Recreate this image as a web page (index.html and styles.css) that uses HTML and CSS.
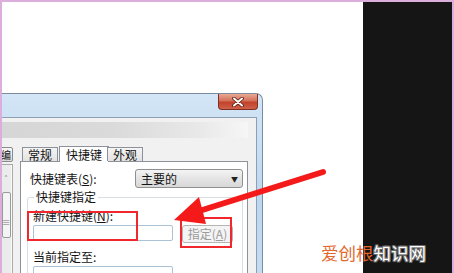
FILE: index.html
```html
<!DOCTYPE html>
<html>
<head>
    <meta charset="utf-8">
    <title>快捷键</title>
    <link rel="stylesheet" href="styles.css">
</head>
<body>
    <div class="page">
        <div class="screen">
            <div class="window">
                <div class="titlebar">
                    <div class="close-btn">
                        <svg width="14" height="10" viewBox="0 0 14 10">
                            <path d="M3 1.5 L11 8.5 M11 1.5 L3 8.5" stroke="#5a1a10" stroke-width="3.6" stroke-linecap="round"/>
                            <path d="M3 1.5 L11 8.5 M11 1.5 L3 8.5" stroke="#fff" stroke-width="2" stroke-linecap="round"/>
                        </svg>
                    </div>
                </div>
                <div class="client">
                    <div class="toolbar-bar"></div>
                    <div class="body-row">
                        <div class="side">
                            <div class="side-btn">编</div>
                            <div class="listbox">
                                <div class="scrollbar">
                                    <span class="sb-arrow">&#708;</span>
                                    <span class="sb-thumb">&#8801;</span>
                                </div>
                            </div>
                        </div>
                        <div class="tabs-area">
                            <div class="tabstrip">
                                <div class="tab">常规</div>
                                <div class="tab active">快捷键</div>
                                <div class="tab">外观</div>
                            </div>
                            <div class="panel">
                                <div class="row">
                                    <span class="label">快捷键表(<u>S</u>):</span>
                                    <div class="combo">
                                        <span>主要的</span>
                                        <span class="combo-arrow">&#9660;</span>
                                    </div>
                                </div>
                                <fieldset class="group">
                                    <legend>快捷键指定</legend>
                                    <div class="label field-label">新建快捷键(<u>N</u>):</div>
                                    <div class="field-row">
                                        <div class="textbox"></div>
                                        <div class="btn disabled">指定(<u>A</u>)</div>
                                    </div>
                                    <div class="label field-label2">当前指定至:</div>
                                    <div class="textbox tall"></div>
                                </fieldset>
                            </div>
                        </div>
                    </div>
                </div>
            </div>
        </div>
        <div class="dark"></div>

        <!-- annotation overlay -->
        <div class="mark mark-input"></div>
        <div class="mark mark-btn"></div>
        <svg class="arrow" width="454" height="273" viewBox="0 0 454 273">
            <line x1="323" y1="172" x2="196" y2="212" stroke="#f51a1a" stroke-width="6" stroke-linecap="round"/>
            <polygon points="174,220 199,197 206,224" fill="#f51a1a"/>
        </svg>
        <div class="watermark"><span class="wm-a">爱创根</span><span class="wm-b">知识网</span></div>
    </div>
</body>
</html>
```

FILE: styles.css
```css
body {
    margin: 0;
    font-family: "Noto Sans CJK SC", "Noto Sans", sans-serif;
    font-size: 12px;
    color: #141414;
}

.page {
    position: relative;
    width: 454px;
    height: 273px;
    box-sizing: border-box;
    padding: 2px 2px 0 2px;
    background: #dcaedc;
    display: flex;
    overflow: hidden;
}

.screen {
    flex: 1;
    background: #fff;
    overflow: hidden;
    display: flex;
    align-items: flex-start;
}

.dark {
    width: 89px;
    background: #151515;
}

/* dialog window */
.window {
    flex: none;
    width: 361px;
    height: 180px;
    margin-top: 91px;
    margin-left: -100px;
    box-sizing: border-box;
    border: 1px solid #7b8ca0;
    border-bottom: none;
    border-radius: 0 7px 0 0;
    padding: 0 5px;
    background: linear-gradient(to bottom, #d3e5f6, #bcd7f0 60%, #c4dcf2);
    display: flex;
    flex-direction: column;
}

.titlebar {
    flex: none;
    height: 23px;
    margin-right: -5px;
    padding-right: 4px;
    display: flex;
    justify-content: flex-end;
    align-items: flex-start;
}

.close-btn {
    width: 40px;
    height: 16px;
    box-sizing: border-box;
    border: 1px solid #7e2e22;
    border-top: none;
    border-radius: 0 0 4px 4px;
    background: linear-gradient(to bottom, #e9a893, #d4715a 45%, #c2422b 55%, #d0614a);
    display: flex;
    align-items: center;
    justify-content: center;
}

.client {
    flex: 1;
    min-height: 0;
    overflow: hidden;
    border: 1px solid #8e9fb3;
    border-bottom: none;
    background: #f1f1f1;
    display: flex;
    flex-direction: column;
}

.toolbar-bar {
    flex: none;
    height: 16px;
    margin: 4px 8px 0 0;
    background: linear-gradient(to right, #d2d2d2, #dadada 60%, #e8e8e8 85%, #f6f6f6);
}

.body-row {
    flex: 1;
    min-height: 0;
    display: flex;
    margin-top: 7px;
    gap: 7px;
}

/* left pane, mostly cut off */
.side {
    width: 104px;
    display: flex;
    flex-direction: column;
}

.side-btn {
    flex: none;
    align-self: flex-end;
    width: 30px;
    height: 15px;
    margin-top: 2px;
    box-sizing: border-box;
    border: 1px solid #8a8a8a;
    border-radius: 2px;
    background: linear-gradient(#f6f6f6, #dcdcdc);
    text-align: right;
    padding-right: 1px;
    font-size: 10px;
    line-height: 13px;
}

.listbox {
    flex: 1;
    margin-top: 2px;
    border: 1px solid #a9a9a9;
    border-bottom: none;
    background: #fafafa;
    display: flex;
    justify-content: flex-end;
}

.scrollbar {
    width: 10px;
    margin-right: 1px;
    background: #ebebeb;
    display: flex;
    flex-direction: column;
    align-items: center;
    font-size: 9px;
    color: #555;
}

.sb-arrow {
    margin-top: 9px;
    line-height: 10px;
}

.sb-thumb {
    margin-top: 8px;
    width: 9px;
    height: 46px;
    box-sizing: border-box;
    border: 1px solid #9a9a9a;
    border-radius: 2px;
    background: #f4f4f4;
    display: flex;
    align-items: center;
    justify-content: center;
    padding-top: 14px;
    font-size: 9px;
    color: #777;
}

/* tabs */
.tabs-area {
    width: 228px;
    display: flex;
    flex-direction: column;
}

.tabstrip {
    flex: none;
    height: 16px;
    display: flex;
    align-items: flex-end;
    padding-left: 2px;
    position: relative;
    z-index: 1;
}

.tab {
    height: 13px;
    line-height: 13px;
    box-sizing: content-box;
    padding: 0 5px;
    border: 1px solid #8d9199;
    border-bottom: none;
    background: linear-gradient(#f4f4f4, #e2e2e2);
    white-space: nowrap;
}

.tab + .tab {
    margin-left: -1px;
}

.tab:first-child {
    margin-right: 3px;
}

.tab.active {
    height: 15px;
    line-height: 15px;
    padding: 0 6px;
    margin-bottom: -1px;
    background: #fff;
    margin-left: -2px;
    margin-right: -1px;
}

.panel {
    flex: 1;
    border: 1px solid #8d9199;
    border-bottom: none;
    background: #fff;
    padding: 7px 4px 0 9px;
}

.row {
    display: flex;
    align-items: center;
    justify-content: space-between;
}

.label {
    line-height: 14px;
    white-space: nowrap;
}

.label u {
    text-decoration: underline;
}

.combo {
    width: 108px;
    height: 19px;
    box-sizing: border-box;
    border: 1px solid #8f8f8f;
    border-radius: 3px;
    background: linear-gradient(#f4f4f4, #e4e4e4 50%, #d8d8d8);
    display: flex;
    align-items: center;
    justify-content: space-between;
    padding: 0 4px 0 5px;
}

.combo-arrow {
    font-size: 7px;
    color: #222;
}

.group {
    margin: 2px 0 0 -3px;
    padding: 0 6px 0 5px;
    border: 1px solid #d5dfe5;
    border-bottom: none;
    border-radius: 3px 3px 0 0;
    min-width: 0;
}

.group legend {
    padding: 0 2px;
    margin-left: 1px;
    line-height: 14px;
}

.field-label {
    margin-top: 5px;
}

.field-row {
    display: flex;
    align-items: flex-start;
    gap: 9px;
    margin-top: 2px;
}

.textbox {
    width: 140px;
    height: 16px;
    box-sizing: border-box;
    border: 1px solid #abc1d6;
    border-radius: 2px;
    background: #fff;
}

.textbox.tall {
    height: 30px;
}

.btn {
    width: 51px;
    height: 18px;
    box-sizing: border-box;
    border: 1px solid #b5b5b5;
    border-radius: 3px;
    background: #f4f4f4;
    text-align: center;
    line-height: 16px;
}

.btn.disabled {
    color: #9a9a9a;
}

.field-label2 {
    margin-top: 7px;
    margin-bottom: 2px;
}

/* red annotation */
.mark {
    position: absolute;
    border: 2px solid #f0282d;
    box-sizing: border-box;
}

.mark-input {
    left: 27px;
    top: 211px;
    width: 111px;
    height: 30px;
}

.mark-btn {
    left: 180px;
    top: 217px;
    width: 52px;
    height: 31px;
}

.arrow {
    position: absolute;
    left: 0;
    top: 0;
    pointer-events: none;
}

.watermark {
    position: absolute;
    left: 321px;
    top: 242px;
    font-size: 17.5px;
    line-height: 22px;
    white-space: nowrap;
}

.wm-a {
    color: #e2672a;
}

.wm-b {
    color: #fff;
    text-shadow: -1px 0 #6a6a6a, 1px 0 #6a6a6a, 0 -1px #6a6a6a, 0 1px #6a6a6a,
        -1px -1px #6a6a6a, 1px 1px #6a6a6a, -1px 1px #6a6a6a, 1px -1px #6a6a6a;
}
```
